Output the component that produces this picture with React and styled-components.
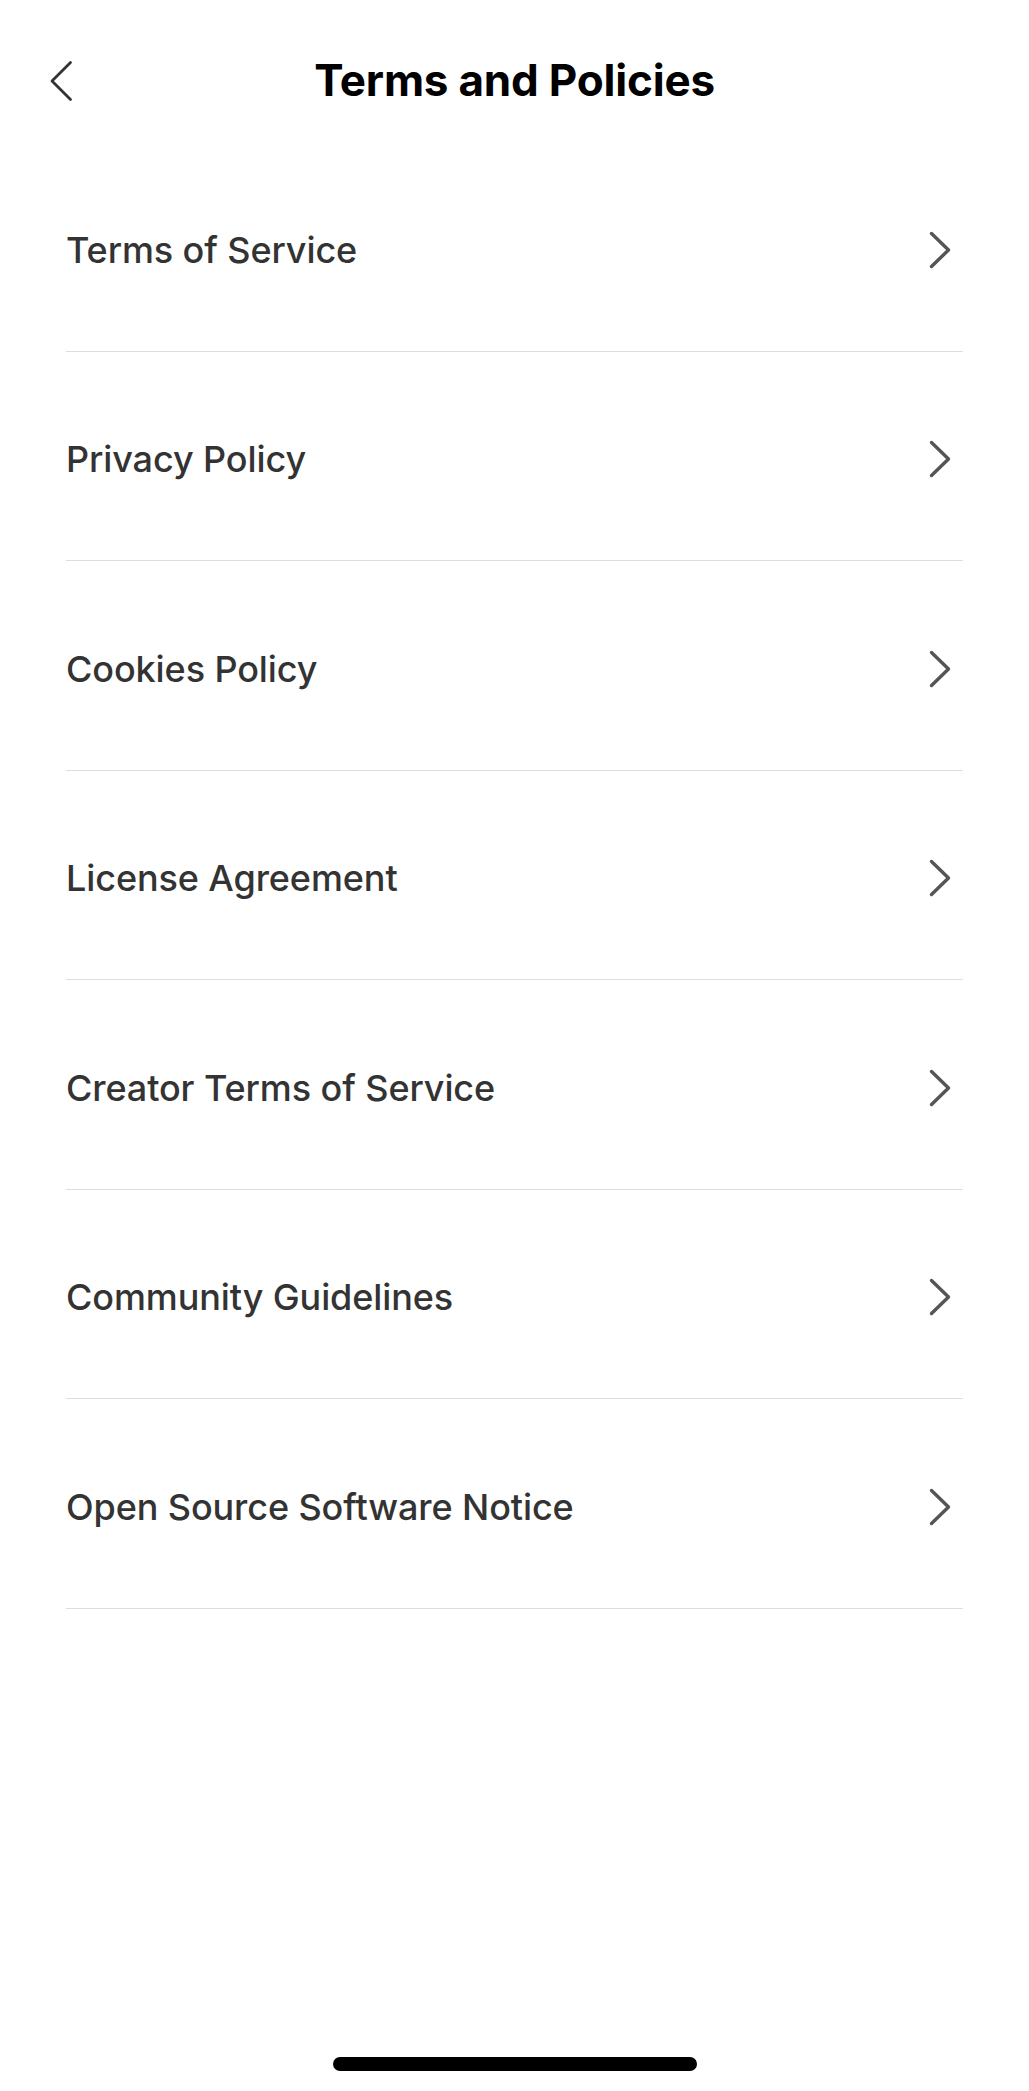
import React from "react";
import styled, { createGlobalStyle } from "styled-components";

const GlobalStyle = createGlobalStyle`
  html, body {
    margin: 0;
    padding: 0;
    background: #ffffff;
  }
  body {
    font-family: Inter, "Noto Sans", "Liberation Sans", sans-serif;
    -webkit-font-smoothing: antialiased;
  }
  * { box-sizing: border-box; }
`;

const Screen = styled.div`
  width: 1029px;
  min-height: 2091px;
  display: flex;
  flex-direction: column;
  background: #ffffff;
`;

const Header = styled.header`
  height: 142px;
  display: grid;
  grid-template-columns: 120px 1fr 120px;
  align-items: start;
  padding-top: 56px;
`;

const BackButton = styled.button`
  border: none;
  background: transparent;
  padding: 0;
  margin-left: 48px;
  margin-top: 3px;
  width: 28px;
  height: 44px;
  display: flex;
  align-items: center;
  justify-content: center;
  cursor: pointer;
`;

const Title = styled.h1`
  margin: 0;
  text-align: center;
  font-size: 44px;
  line-height: 48px;
  font-weight: 700;
  color: #000000;
  letter-spacing: -0.2px;
`;

const List = styled.ul`
  list-style: none;
  margin: 0;
  padding: 0 66px;
`;

const Row = styled.li`
  height: 209.5px;
  display: flex;
  align-items: center;
  justify-content: space-between;
  border-bottom: 1px solid #dedede;
  padding-top: 7px;
`;

const Label = styled.span`
  font-size: 36px;
  font-weight: 500;
  color: #333333;
  letter-spacing: -0.1px;
`;

const Chevron = styled.svg`
  width: 28px;
  height: 40px;
  margin-right: 9px;
  flex-shrink: 0;
`;

const Spacer = styled.div`
  flex: 1;
`;

const HomeIndicator = styled.div`
  align-self: center;
  width: 364px;
  height: 14px;
  border-radius: 7px;
  background: #000000;
  margin: 0 0 20px 0;
`;

const items = [
  "Terms of Service",
  "Privacy Policy",
  "Cookies Policy",
  "License Agreement",
  "Creator Terms of Service",
  "Community Guidelines",
  "Open Source Software Notice",
];

export default function App() {
  return (
    <>
      <GlobalStyle />
      <Screen>
        <Header>
          <BackButton aria-label="Back">
            <svg width="28" height="44" viewBox="0 0 28 44">
              <path
                d="M22.5 3.5 L4 22 L22.5 40.5"
                fill="none"
                stroke="#333333"
                strokeWidth="2.8"
                strokeLinecap="round"
                strokeLinejoin="round"
              />
            </svg>
          </BackButton>
          <Title>Terms and Policies</Title>
          <div />
        </Header>
        <List>
          {items.map((item) => (
            <Row key={item}>
              <Label>{item}</Label>
              <Chevron viewBox="0 0 28 40">
                <path
                  d="M5.5 3.5 L22.5 20 L5.5 36.5"
                  fill="none"
                  stroke="#555555"
                  strokeWidth="3.4"
                  strokeLinecap="round"
                  strokeLinejoin="round"
                />
              </Chevron>
            </Row>
          ))}
        </List>
        <Spacer />
        <HomeIndicator />
      </Screen>
    </>
  );
}
